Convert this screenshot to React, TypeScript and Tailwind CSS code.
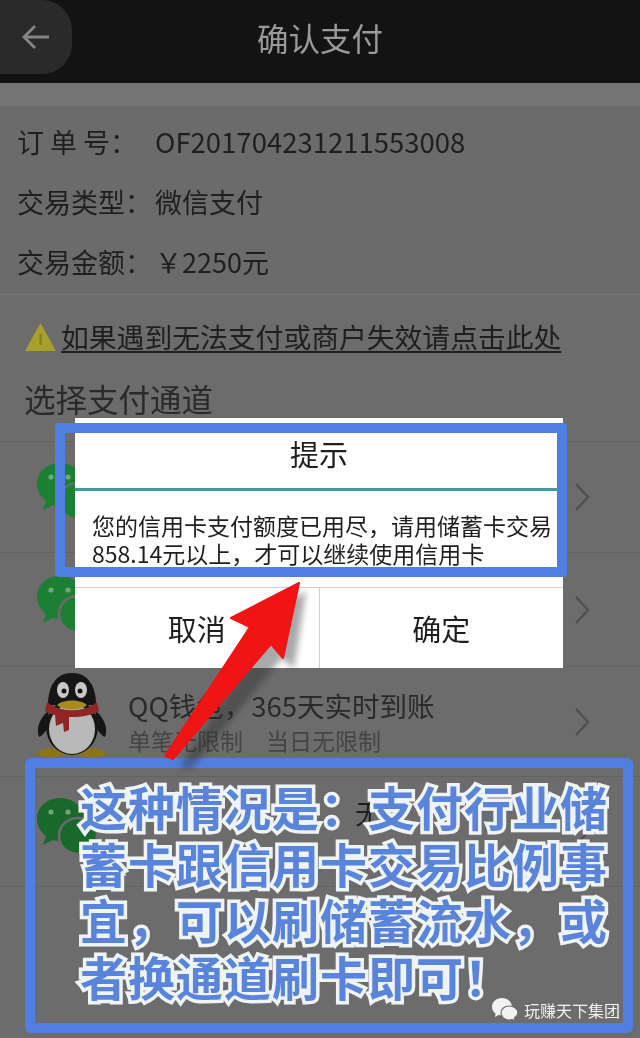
import React from "react";

const cjk = "font-['Noto_Sans_CJK_SC','Liberation_Sans',sans-serif]";

const Chevron = () => (
  <svg width="16" height="30" viewBox="0 0 16 30" fill="none" className="shrink-0">
    <path d="M2 2 L14 15 L2 28" stroke="#4f4f4f" strokeWidth="2.4" />
  </svg>
);

const WechatIcon = ({ color = "#1c7f34" }: { color?: string }) => (
  <svg width="62" height="66" viewBox="0 0 62 66" className="mb-[6px] shrink-0">
    <path d="M24 2C11 2 1 11 1 23c0 7 4 13 9 17l-3 9 10-5c2 .6 5 1 7 1 13 0 24-10 24-22S37 2 24 2z" fill={color} />
    <path d="M42 22c-11 0-19 8-19 18s8 18 19 18c2 0 4-.3 6-1l8 5-2-8c4-3 7-8 7-14 0-10-8-18-19-18z" fill={color} stroke="#6b6b6b" strokeWidth="2.5" />
    <circle cx="15" cy="16" r="2.6" fill="#6fa67c" />
    <circle cx="32" cy="16" r="2.6" fill="#6fa67c" />
  </svg>
);

const Penguin = () => (
  <svg width="72" height="88" viewBox="0 0 72 88" className="mb-[14px] ml-[10px] shrink-0">
    <ellipse cx="15" cy="82" rx="13" ry="5" fill="#8a7420" />
    <ellipse cx="56" cy="82" rx="13" ry="5" fill="#8a7420" />
    <path d="M12 40 C3 48 0 58 3 66 C8 64 11 58 14 52 Z" fill="#151515" />
    <path d="M60 40 C69 48 72 58 69 66 C64 64 61 58 58 52 Z" fill="#151515" />
    <ellipse cx="36" cy="56" rx="26" ry="28" fill="#151515" />
    <ellipse cx="36" cy="58" rx="23" ry="25" fill="#b9b9b9" />
    <path d="M36 2 C20 2 12 15 12 34 L60 34 C60 15 52 2 36 2 Z" fill="#151515" />
    <path d="M11 31 C25 42 47 42 61 31 L63 40 C50 48 22 48 9 40 Z" fill="#8f2626" />
    <path d="M19 43 L33 45 L33 59 L28 61 L27 52 L20 55 Z" fill="#8f2626" />
    <ellipse cx="27" cy="19" rx="6" ry="8" fill="#c8c8c8" />
    <ellipse cx="45" cy="19" rx="6" ry="8" fill="#c8c8c8" />
    <circle cx="28" cy="20" r="2.5" fill="#151515" />
    <circle cx="44" cy="20" r="2.5" fill="#151515" />
    <path d="M21 34 C27 28 45 28 51 34 C45 40 27 40 21 34 Z" fill="#a98a1f" />
  </svg>
);

// payment channel row, dialog covers most of them
const ChannelRow = ({ icon, children, height }: { icon: React.ReactNode; children?: React.ReactNode; height: string }) => (
  <div className={`flex items-center border-b border-[#626262] pr-[50px] ${height}`}>
    <div className="flex w-[128px] shrink-0 justify-center pl-[6px]">{icon}</div>
    <div className="min-w-0 flex-1">{children}</div>
    <Chevron />
  </div>
);

export default function App() {
  return (
    <div className={`relative h-[1038px] w-[640px] overflow-hidden bg-[#6c6c6c] ${cjk} text-[#1f1f1f] blur-[0.5px]`}>
      <header className="relative flex h-[83px] items-center justify-center bg-[#131313] pb-[8px]">
        <div className="absolute left-0 top-0 flex h-[74px] w-[72px] items-center rounded-r-[30px] bg-[#2a2a2a] pl-[22px]">
          <svg width="28" height="26" viewBox="0 0 28 26" fill="none">
            <path d="M13 2 L2 13 L13 24 M2 13 H27" stroke="#858585" strokeWidth="2.8" />
          </svg>
        </div>
        <h1 className="text-[31.5px] text-[#9a9a9a]">确认支付</h1>
      </header>

      <div className="h-[23px] bg-[#747474]" />

      <section className="h-[189px] border-b border-[#777] bg-[#6b6b6b] pl-[17px] pt-[6px] text-[27px]">
        <div className="flex h-[60px] items-center">
          <span className="w-[138px] whitespace-pre">{"订 单 号\uFF1A"}</span>
          <span className="text-[27.5px]">OF201704231211553008</span>
        </div>
        <div className="flex h-[60px] items-center">
          <span className="w-[138px]">{"交易类型\uFF1A"}</span>
          <span>微信支付</span>
        </div>
        <div className="flex h-[60px] items-center">
          <span className="w-[138px]">{"交易金额\uFF1A"}</span>
          <span>{"\uFFE52250元"}</span>
        </div>
      </section>

      <div className="flex h-[62px] items-end pl-[24px]">
        <div className="flex h-[40px] items-center gap-[4px]">
          <svg width="33" height="30" viewBox="0 0 33 30">
            <path d="M16.5 1 L32 29 H1 Z" fill="#a8a02c" />
            <rect x="15.5" y="12" width="2.4" height="11" fill="#8a7f20" />
          </svg>
          <span className="text-[27.8px] underline underline-offset-[3px] decoration-[1.5px]">如果遇到无法支付或商户失效请点击此处</span>
        </div>
      </div>

      <div className="flex h-[85px] items-center border-b border-[#626262] pb-[1px] pl-[24px] text-[31.5px] text-[#2a2a2a]">选择支付通道</div>

      <ChannelRow height="h-[111px]" icon={<WechatIcon />} />
      <ChannelRow height="h-[114px]" icon={<WechatIcon />} />
      <ChannelRow height="h-[110px]" icon={<Penguin />}>
        <div className="text-[27.5px] leading-[36px] text-[#2a2a2a]">{"QQ钱包\uFF0C365天实时到账"}</div>
        <div className="flex gap-[23px] text-[23px] leading-[34px] text-[#444]">
          <span>单笔无限制</span>
          <span>当日无限制</span>
        </div>
      </ChannelRow>
      <ChannelRow height="h-[110px]" icon={<WechatIcon color="#19692c" />}>
        <div className="pb-[38px] pl-[227px] text-[27px] leading-[36px] text-[#1f1f1f]">无</div>
      </ChannelRow>

      {/* dialog */}
      <div className="absolute left-[75px] top-[418px] flex h-[250px] w-[488px] flex-col bg-white">
        <div className="flex h-[73px] items-center justify-center border-b-[3px] border-[#3f9c9c] pt-[2px] text-[29px]">提示</div>
        <div className="h-[96px] pl-[17px] pt-[20px] text-[23px] leading-[28px]">
          {"您的信用卡支付额度已用尽\uFF0C请用储蓄卡交易"}
          <br />
          {"858.14元以上\uFF0C才可以继续使用信用卡"}
        </div>
        <div className="flex flex-1 border-t border-[#cfcfcf] text-[29px]">
          <div className="flex flex-1 items-center justify-center border-r border-[#cfcfcf] pt-[2px]">取消</div>
          <div className="flex flex-1 items-center justify-center pt-[2px]">确定</div>
        </div>
      </div>

      {/* blue frames */}
      <div className="absolute left-[55px] top-[423px] h-[154px] w-[512px] rounded-[4px] border-[10px] border-[#4f7fe0]" />
      <div className="absolute left-[25px] top-[758px] h-[275px] w-[608px] rounded-[6px] border-[10px] border-[#4f7fe0]" />

      {/* red arrow */}
      <svg className="absolute left-0 top-0" width="640" height="1038" viewBox="0 0 640 1038">
        <polygon className="blur-[3px]" points="300,586 236,622 260,632 173,762 185,764 276,653 288,664" fill="#2a2a2a" opacity="0.4" transform="translate(6 5)" />
        <polygon points="299,583 231,618 250,627 165,756 173,759 271,644 283,658" fill="#f01414" stroke="#f01414" strokeWidth="2" strokeLinejoin="round" />
      </svg>

      {/* note text */}
      <div className="absolute left-[80px] top-[778px] whitespace-nowrap text-[47px] font-bold leading-[56.500px] tracking-[1px] text-[#5a84da] [-webkit-text-stroke:7px_#eef3f6] [paint-order:stroke_fill]">
        {"这种情况是\uFF1A支付行业储"}
        <br />
        蓄卡跟信用卡交易比例事
        <br />
        {"宜\uFF0C可以刷储蓄流水\uFF0C或"}
        <br />
        {"者换通道刷卡即可\uFF01"}
      </div>

      {/* watermark */}
      <div className="absolute left-[491px] top-[997px] flex items-center gap-[5px] text-[16px] leading-[24px] text-[#f2f2f2]">
        <svg width="28" height="26" viewBox="0 0 28 26">
          <path d="M11 1C5 1 1 5 1 10c0 3 1.500 5 3.500 6.500L4 20l3.500-2c1 .3 2.500 .5 3.500 .5 5.500 0 10-3.500 10-8.500S16.500 1 11 1z" fill="#f2f2f2" />
          <path d="M18 9c-4.500 0-8 3-8 7s3.500 7 8 7c1 0 2-.1 3-.5L24 24l-.6-3c2-1.300 3.600-3 3.600-5.500C27 12 23 9 18 9z" fill="#f2f2f2" stroke="#6c6c6c" strokeWidth="1.200" />
        </svg>
        <span>玩赚天下集团</span>
      </div>
    </div>
  );
}
